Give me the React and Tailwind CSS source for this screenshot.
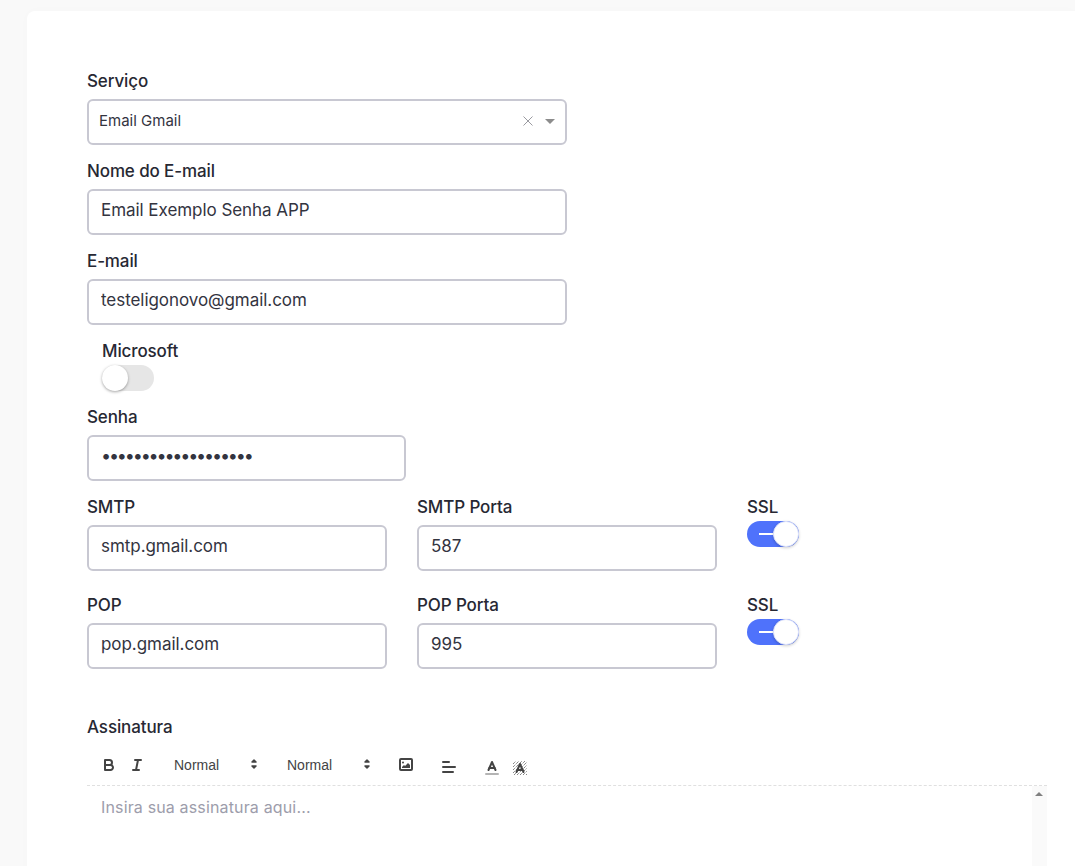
const font = "[font-family:Inter,'Noto_Sans',sans-serif]";

function Label({ children, className = "mb-1.5" }) {
  return <div className={`h-6 text-[17px] leading-6 font-medium tracking-[-0.12px] text-[#272833] ${className}`}>{children}</div>;
}

function Input({ value, type = "text", className = "" }) {
  return (
    <input
      readOnly
      type={type}
      value={value}
      className={`block h-[46px] rounded-md border-2 border-[#c8c8d2] bg-white px-3 pb-1 text-[#33343f] outline-none ${className}`}
    />
  );
}

function Toggle({ on = false }) {
  if (on) {
    return (
      <div className="relative h-[26px] w-[52px] rounded-full bg-[#4f72fb]">
        <div className="absolute left-[12px] top-[12px] h-[2px] w-[14px] bg-white" />
        <div className="absolute right-0 top-0 h-[26px] w-[26px] rounded-full bg-white border border-[#dfe4fb] shadow-[0_1px_3px_rgba(0,0,0,0.2)]" />
      </div>
    );
  }
  return (
    <div className="relative h-[26px] w-[52px] rounded-full bg-[#e6e6e6]">
      <div className="absolute left-0 top-0 h-[26px] w-[26px] rounded-full bg-white shadow-[0_1px_3px_rgba(0,0,0,0.35)]" />
    </div>
  );
}

function Ico({ children, className = "" }) {
  return (
    <svg viewBox="0 0 18 18" className={`block h-[18px] w-[18px] ${className}`} fill="none" stroke="#444" strokeWidth="2" strokeLinecap="round" strokeLinejoin="round">
      {children}
    </svg>
  );
}

function Btn({ children, offset = "mt-0" }) {
  return <div className={`h-6 w-7 px-[5px] py-[3px] ${offset}`}>{children}</div>;
}

function Picker() {
  return (
    <div className="relative mr-[15px] h-6 w-[98px] pl-2 text-[14px] leading-[24px] text-[#444] [font-family:'Liberation_Sans',sans-serif]">
      Normal
      <svg viewBox="0 0 18 18" className="absolute right-[1px] top-[2px] h-[18px] w-[18px]" fill="#444" stroke="#444" strokeWidth="1.5" strokeLinejoin="round">
        <polygon points="7 7 9 5 11 7" />
        <polygon points="7 11 9 13 11 11" />
      </svg>
    </div>
  );
}

function Toolbar() {
  return (
    <div className="flex h-[41px] items-start border-b border-dashed border-[#e0e0e0] px-2 pt-2">
      <div className="mr-[15px] flex">
        <Btn>
          <Ico>
            <path d="M5,4H9.5A2.5,2.5,0,0,1,12,6.5v0A2.5,2.5,0,0,1,9.5,9H5V4Z" />
            <path d="M5,9h5.5A2.5,2.5,0,0,1,13,11.5v0A2.5,2.5,0,0,1,10.5,14H5V9Z" />
          </Ico>
        </Btn>
        <Btn>
          <Ico>
            <line x1="7" x2="13" y1="4" y2="4" />
            <line x1="5" x2="11" y1="14" y2="14" />
            <line x1="8" x2="10" y1="14" y2="4" />
          </Ico>
        </Btn>
      </div>
      <Picker />
      <Picker />
      <div className="mr-[15px]">
        <Btn>
          <svg viewBox="0 0 18 18" className="block h-[18px] w-[18px]" fill="none" stroke="#444" strokeWidth="2">
            <rect x="3" y="3" width="12" height="11" rx="1" />
            <circle cx="6" cy="6.5" r="1" fill="#444" stroke="none" />
            <polygon points="5 12 5 11 7 9 8 10 11 7 13 9 13 12" fill="#444" stroke="none" />
          </svg>
        </Btn>
      </div>
      <div className="mr-[15px]">
        <Btn offset="mt-[2px]">
          <Ico>
            <line x1="3" x2="15" y1="9" y2="9" />
            <line x1="3" x2="13" y1="14" y2="14" />
            <line x1="3" x2="9" y1="4" y2="4" />
          </Ico>
        </Btn>
      </div>
      <Btn offset="mt-[3px]">
        <Ico>
          <line x1="3" x2="15" y1="15" y2="15" opacity="0.4" />
          <polyline points="5.5 11 9 3 12.5 11" />
          <line x1="11.63" x2="6.38" y1="9" y2="9" />
        </Ico>
      </Btn>
      <Btn offset="mt-[3px]">
        <svg viewBox="0 0 18 18" className="block h-[18px] w-[18px]" fill="none" stroke="#444" strokeWidth="2" strokeLinecap="round" strokeLinejoin="round">
          <g stroke="#555" strokeWidth="1" strokeDasharray="1 1" strokeLinecap="butt">
            <path d="M2 5 L5 2 M2 8 L8 2 M2 11 L11 2 M2 14 L14 2 M3 16 L16 3 M6 16 L16 6 M9 16 L16 9 M12 16 L16 12 M15 16 L16 15" />
          </g>
          <polyline points="5.5 13 9 5 12.5 13" />
          <line x1="11.63" x2="6.38" y1="11" y2="11" />
        </svg>
      </Btn>
    </div>
  );
}

export default function App() {
  return (
    <div className={`flex h-[866px] w-full flex-col overflow-hidden bg-[#f9f9f9] pl-[27px] pt-[11px] ${font}`}>
      <div className="flex-1 rounded-tl-lg bg-white pl-[60px] pr-7 pt-[58px] shadow-[0_0_12px_rgba(0,0,0,0.015)]">
        <div className="mb-3.5">
          <Label>Serviço</Label>
          <div className="flex h-[46px] w-[480px] items-center justify-between rounded-md border-2 border-[#c8c8d2] bg-white pb-[2px] pl-2.5 pr-[10px] text-[15px] text-[#33343f]">
            <span>Email Gmail</span>
            <span className="flex items-center gap-[11px]">
              <svg viewBox="0 0 12 12" className="h-3 w-3" fill="none" stroke="#9a9aa0" strokeWidth="1">
                <path d="M1.5 1.5 L10.5 10.5 M10.5 1.5 L1.5 10.5" />
              </svg>
              <span className="h-0 w-0 border-x-[5px] border-t-[5px] border-x-transparent border-t-[#8c8c8c]" />
            </span>
          </div>
        </div>

        <div className="mb-3.5">
          <Label>Nome do E-mail</Label>
          <Input value="Email Exemplo Senha APP" className="w-[480px] text-[17px] tracking-[-0.05px]" />
        </div>

        <div className="mb-3.5">
          <Label>E-mail</Label>
          <Input value="testeligonovo@gmail.com" className="w-[480px] text-[17px] tracking-[-0.05px]" />
        </div>

        <div className="mb-3.5 pl-[15px]">
          <Label className="mb-[2px]">Microsoft</Label>
          <Toggle />
        </div>

        <div className="mb-3.5">
          <Label>Senha</Label>
          <Input type="password" value="aaaaaaaaaaaaaaaaaaa" className="w-[319px] pb-[6px] text-[18px] tracking-[-2.2px]" />
        </div>

        <div className="mb-[22px] flex gap-[30px]">
          <div>
            <Label>SMTP</Label>
            <Input value="smtp.gmail.com" className="w-[300px] text-[17px] tracking-[-0.05px]" />
          </div>
          <div>
            <Label>SMTP Porta</Label>
            <Input value="587" className="w-[300px] text-[17px] tracking-[-0.05px]" />
          </div>
          <div>
            <Label className="mb-[2px]">SSL</Label>
            <Toggle on />
          </div>
        </div>

        <div className="mb-[46px] flex gap-[30px]">
          <div>
            <Label>POP</Label>
            <Input value="pop.gmail.com" className="w-[300px] text-[17px] tracking-[-0.05px]" />
          </div>
          <div>
            <Label>POP Porta</Label>
            <Input value="995" className="w-[300px] text-[17px] tracking-[-0.05px]" />
          </div>
          <div>
            <Label className="mb-[2px]">SSL</Label>
            <Toggle on />
          </div>
        </div>

        <Label>Assinatura</Label>
        <Toolbar />
        <div className="flex">
          <div className="flex-1 px-[14px] py-[9px] text-[16px] leading-6 tracking-[0.15px] text-[#9d9dab]">Insira sua assinatura aqui...</div>
          <div className="relative h-[100px] w-[15px] bg-[#fafafa]">
            <div className="absolute left-[3px] top-[6px] h-0 w-0 border-x-[4px] border-b-[4px] border-x-transparent border-b-[#808080]" />
          </div>
        </div>
      </div>
    </div>
  );
}
